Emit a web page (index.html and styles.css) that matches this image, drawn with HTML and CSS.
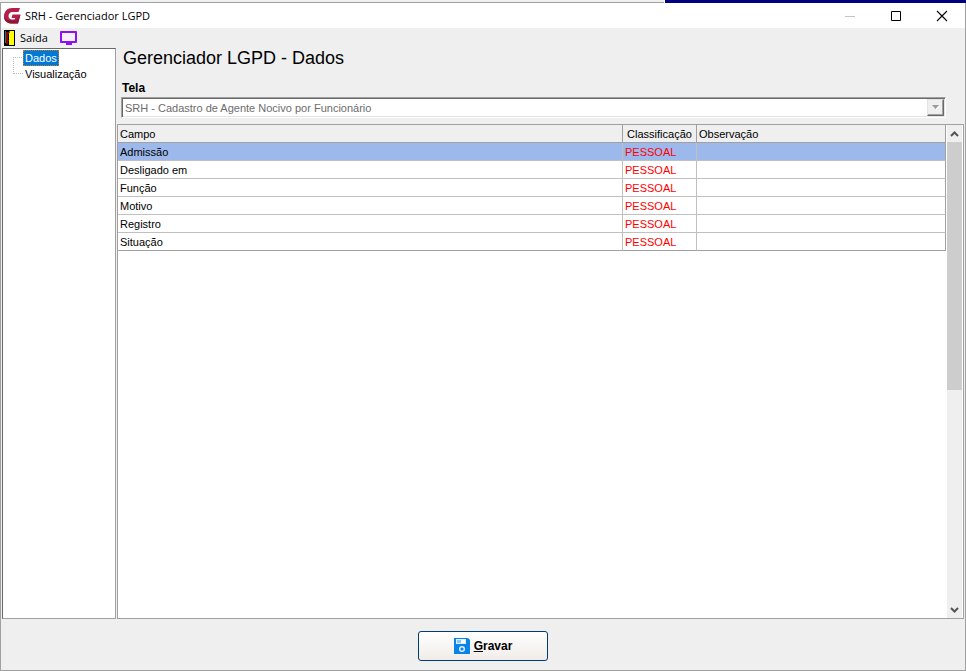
FILE: index.html
```html
<!DOCTYPE html>
<html lang="pt-BR">
<head>
<meta charset="utf-8">
<title>SRH - Gerenciador LGPD</title>
<link rel="stylesheet" href="styles.css">
</head>
<body>
<div class="backdrop"><span class="backdrop-left"></span><span class="backdrop-right"></span></div>
<div class="window">
  <header class="titlebar">
    <svg class="logo" width="18" height="18" viewBox="0 0 18 18"><path d="M17 1 15.500 5H9.500C7 5 5.500 6.800 5.500 9s1.500 3.500 3.500 3.500h2.500l.5-1.500H8.500L9.500 7.500H17.500L15 16.500H8.500C4 16.500 1 13.500 1 9.200 1 4.500 4.500 1 9 1z" fill="#b5204a"/><path d="M1 9.500c0 4 3 7 7.500 7H15l2.500-9L13.500 13.500H8.500C5 13.500 2.500 12.500 1 9.500z" fill="#8c1638"/></svg>
    <h1 class="title">SRH - Gerenciador LGPD</h1>
    <button class="caption" disabled aria-label="Minimizar"><svg width="12" height="12"><path d="M1 6.500h10" stroke="#c4c4c4"/></svg></button>
    <button class="caption" aria-label="Maximizar"><svg width="12" height="12"><path d="M1.500 1.500h9v9h-9z" fill="none" stroke="#000"/></svg></button>
    <button class="caption" aria-label="Fechar"><svg width="12" height="12"><path d="M1 1l10 10M11 1 1 11" stroke="#000" stroke-width="1.100"/></svg></button>
  </header>
  <nav class="toolbar">
    <button class="tool"><svg width="11" height="16" shape-rendering="crispEdges"><path d="M0 0h11v16H0z" fill="#000"/><path d="M5 1h5v14H5z" fill="#ff0"/><path d="M1 1h1v12H1z" fill="#008080"/><path d="M2 2h3v9H4v3H2z" fill="#900000"/><path d="M4 4h1v6H4z" fill="#000"/><path d="M5 1h1v2H5z" fill="#808000"/></svg>Saída</button>
    <button class="tool" aria-label="Monitor"><svg width="18" height="14"><path d="M1 1h15v10H1z" fill="#f6f0fa" stroke="#8d10f0" stroke-width="2" stroke-linejoin="round"/><path d="M6 12h6v2H6z" fill="#8d10f0"/></svg></button>
  </nav>
  <div class="body">
    <aside class="tree">
      <ul>
        <li><a class="node selected" href="#dados">Dados</a></li>
        <li><a class="node" href="#visualizacao">Visualização</a></li>
      </ul>
    </aside>
    <main class="main">
      <h2 class="heading">Gerenciador LGPD - Dados</h2>
      <label class="label" for="tela">Tela</label>
      <div class="combo">
        <select id="tela" disabled><option>SRH - Cadastro de Agente Nocivo por Funcionário</option></select>
        <span class="arrow"><svg width="8" height="5"><path d="M1 1h7L4.500 5z" fill="#fff"/><path d="M0 0h7L3.500 4z" fill="#9a9a9a"/></svg></span>
      </div>
      <div class="grid">
        <div class="sheet">
          <table>
            <colgroup><col><col class="col-class"><col class="col-obs"></colgroup>
            <thead><tr><th>Campo</th><th class="center">Classificação</th><th>Observação</th></tr></thead>
            <tbody>
              <tr class="current"><td>Admissão</td><td class="kind">PESSOAL</td><td></td></tr>
              <tr><td>Desligado em</td><td class="kind">PESSOAL</td><td></td></tr>
              <tr><td>Função</td><td class="kind">PESSOAL</td><td></td></tr>
              <tr><td>Motivo</td><td class="kind">PESSOAL</td><td></td></tr>
              <tr><td>Registro</td><td class="kind">PESSOAL</td><td></td></tr>
              <tr><td>Situação</td><td class="kind">PESSOAL</td><td></td></tr>
            </tbody>
          </table>
        </div>
        <div class="scroll">
          <span class="step"><svg width="9" height="8"><path d="M1 6l3.500-3.500L8 6" fill="none" stroke="#555" stroke-width="2"/></svg></span>
          <span class="track"><span class="thumb"></span></span>
          <span class="step"><svg width="9" height="8"><path d="M1 2l3.500 3.500L8 2" fill="none" stroke="#555" stroke-width="2"/></svg></span>
        </div>
      </div>
    </main>
  </div>
  <footer class="footer">
    <button class="save"><svg width="16" height="16"><path d="M0 0h14l2 2v14H0z" fill="#0a84e8"/><path d="M2 1h10v5H2z" fill="#d8efff"/><path d="M3 2h4v3H3z" fill="#8cc6f5"/><path d="M7 2h4v3H7z" fill="#fff"/><circle cx="8" cy="11" r="2.300" fill="#0a84e8" stroke="#d8efff" stroke-width="1.500"/></svg><span><u>G</u>ravar</span></button>
  </footer>
</div>
</body>
</html>
```
FILE: styles.css
```css
* { box-sizing: border-box; }
body {
  margin: 0;
  height: 100vh;
  display: flex;
  flex-direction: column;
  background: #efefef;
  color: #000;
  font: 11px/16px "Liberation Sans", Arial, sans-serif;
}
button { font: inherit; color: inherit; border: 0; padding: 0; background: none; }
svg { display: block; flex: none; }

.backdrop { display: flex; height: 3px; background: #fff; gap: 1px; }
.backdrop-left { flex: 664; border-bottom: 1px solid #a0a0a0; background: #f0f0f0; }
.backdrop-right { flex: 301; background: #000080; }

.window {
  flex: 1;
  min-height: 0;
  display: flex;
  flex-direction: column;
  border: solid #a0a0a0;
  border-width: 0 1px 1px;
}
.titlebar { display: flex; align-items: center; height: 25px; padding-left: 2px; background: #fff; }
.title { flex: 1; margin: 0 0 0 4px; font: 11px/16px "Open Sans", "Noto Sans", sans-serif; }
.caption { width: 46px; height: 24px; display: flex; align-items: center; justify-content: center; }

.toolbar { display: flex; height: 20px; padding-left: 3px; gap: 12px; }
.tool { display: flex; align-items: center; gap: 5px; font: 11px/16px "Open Sans", "Noto Sans", sans-serif; }

.body { flex: 1; min-height: 0; display: flex; padding: 0 1px; gap: 1px; }
.tree {
  width: 114px;
  background: #fff;
  border: 1px solid #a0a0a0;
  border-top-color: #696969;
  border-left-color: #696969;
  padding: 1px 0 0 10px;
}
.tree ul { list-style: none; margin: 0; padding: 0; }
.tree li { display: flex; align-items: center; height: 16px; position: relative; padding-left: 10px; }
.tree li::before {
  content: "";
  position: absolute;
  left: 0;
  bottom: 8px;
  width: 9px;
  height: 16px;
  border: dotted #b8b8b8;
  border-width: 0 0 1px 1px;
}
.tree li:first-child::before { height: 1px; border-left: 0; }
.node { color: #000; text-decoration: none; padding: 0 1px; line-height: 14px; border: 1px solid transparent; white-space: nowrap; }
.selected { background: #0078d7; color: #fff; border: 1px dotted #d07820; }

.main { flex: 1; min-width: 0; display: flex; flex-direction: column; }
.heading { margin: 0 6px; font-size: 18px; font-weight: 400; line-height: 20px; }
.label { margin: 12px 5px 1px; font-size: 12px; font-weight: 700; }
.combo {
  display: flex;
  height: 21px;
  margin: 0 18px 6px 4px;
  padding: 1px;
  border: 1px solid;
  border-color: #a0a0a0 #fff #fff #a0a0a0;
  background: #fff;
  box-shadow: inset 1px 1px #696969, inset -1px -1px #e3e3e3;
}
.combo select {
  flex: 1;
  appearance: none;
  border: 0;
  margin: 0;
  padding: 0 2px;
  background: transparent;
  color: #6d6d6d;
  opacity: 1;
  font: inherit;
}
.arrow {
  width: 17px;
  display: flex;
  align-items: center;
  justify-content: center;
  background: #efefef;
  border: 1px solid;
  border-color: #e3e3e3 #696969 #696969 #e3e3e3;
  box-shadow: inset -1px -1px #a0a0a0;
}

.grid { flex: 1; min-height: 0; display: flex; border: 1px solid #a0a0a0; background: #fff; }
.sheet { flex: 1; min-width: 0; }
table { width: 100%; table-layout: fixed; border-collapse: separate; border-spacing: 0; }
.col-class { width: 74px; }
.col-obs { width: 249px; }
th, td {
  height: 18px;
  padding: 0 2px;
  border: solid #c0c0c0;
  border-width: 0 1px 1px 0;
  line-height: 16px;
  font-weight: 400;
  text-align: left;
  white-space: nowrap;
}
th { background: #efefef; border-color: #a0a0a0; }
th.center { text-align: center; }
td:last-child { border-right-color: #a0a0a0; }
tbody tr:last-child td { border-bottom-color: #a0a0a0; }
.current td { background: #9db8eb; }
.kind { color: #f00; }

.scroll { width: 17px; display: flex; flex-direction: column; background: #efefef; border: solid #fff; border-width: 0 1px; }
.step { height: 17px; display: flex; align-items: center; justify-content: center; }
.track { flex: 1; display: flex; flex-direction: column; }
.thumb { height: 54%; background: #cdcdcd; }

.footer { display: flex; justify-content: center; align-items: center; height: 51px; padding-top: 3px; }
.save {
  display: flex;
  align-items: center;
  justify-content: center;
  gap: 4px;
  width: 130px;
  height: 30px;
  border: 1px solid #003c74;
  border-radius: 3px;
  background: linear-gradient(#fff, #f0ece8);
  font-size: 12px;
  font-weight: 700;
}
```
